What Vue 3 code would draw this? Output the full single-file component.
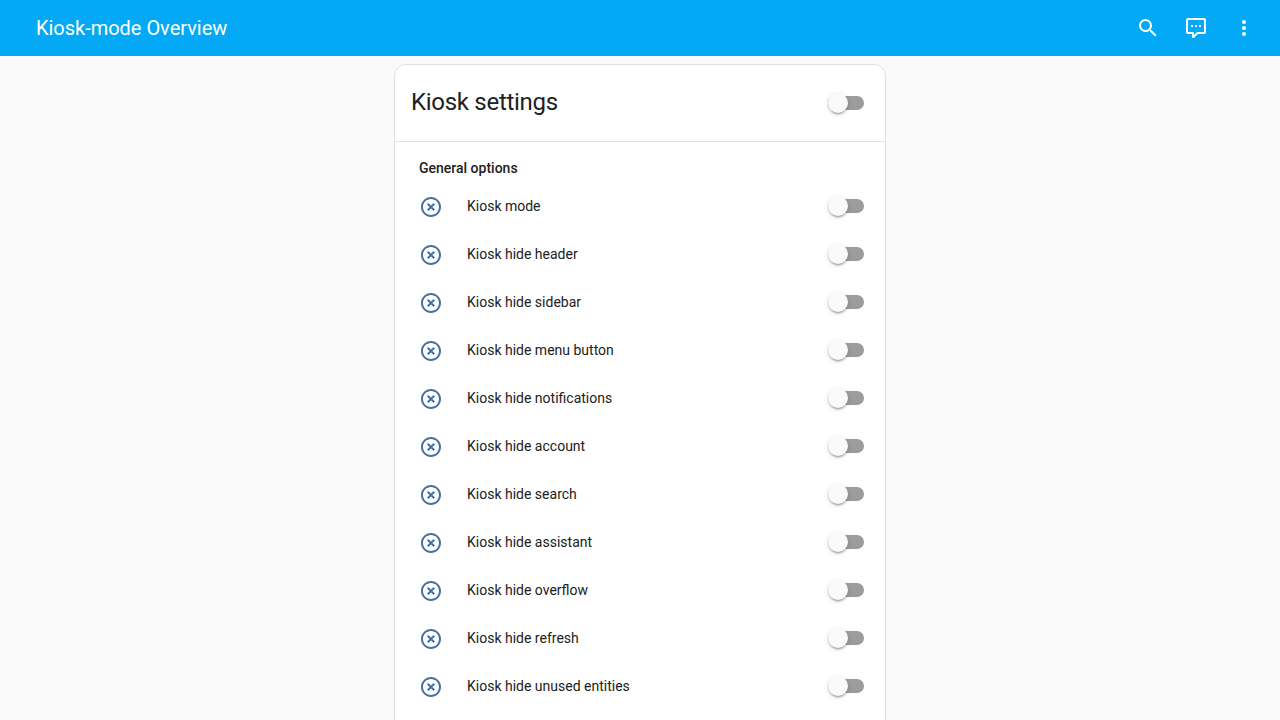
<script setup>
const options = [
  'Kiosk mode',
  'Kiosk hide header',
  'Kiosk hide sidebar',
  'Kiosk hide menu button',
  'Kiosk hide notifications',
  'Kiosk hide account',
  'Kiosk hide search',
  'Kiosk hide assistant',
  'Kiosk hide overflow',
  'Kiosk hide refresh',
  'Kiosk hide unused entities',
]
</script>

<template>
  <div class="page">
    <header class="toolbar">
      <div class="title">Kiosk-mode Overview</div>
      <nav class="actions">
        <button class="action" aria-label="Search">
          <svg viewBox="0 0 24 24"><path d="M9.5,3A6.5,6.5 0 0,1 16,9.5C16,11.11 15.41,12.59 14.44,13.73L14.71,14H15.5L20.5,19L19,20.5L14,15.5V14.71L13.73,14.44C12.59,15.41 11.11,16 9.5,16A6.5,6.5 0 0,1 3,9.5A6.5,6.5 0 0,1 9.5,3M9.5,5C7,5 5,7 5,9.5C5,12 7,14 9.5,14C12,14 14,12 14,9.5C14,7 12,5 9.5,5Z" /></svg>
        </button>
        <button class="action" aria-label="Assistant">
          <svg viewBox="0 0 24 24"><path d="M9,22A1,1 0 0,1 8,21V18H4A2,2 0 0,1 2,16V4C2,2.89 2.9,2 4,2H20A2,2 0 0,1 22,4V16A2,2 0 0,1 20,18H13.9L10.2,21.71C10,21.9 9.75,22 9.5,22V22H9M10,16V19.08L13.08,16H20V4H4V16H10M17,11H15V9H17V11M13,11H11V9H13V11M9,11H7V9H9V11Z" /></svg>
        </button>
        <button class="action" aria-label="Menu">
          <svg viewBox="0 0 24 24"><path d="M12,16A2,2 0 0,1 14,18A2,2 0 0,1 12,20A2,2 0 0,1 10,18A2,2 0 0,1 12,16M12,10A2,2 0 0,1 14,12A2,2 0 0,1 12,14A2,2 0 0,1 10,12A2,2 0 0,1 12,10M12,4A2,2 0 0,1 14,6A2,2 0 0,1 12,8A2,2 0 0,1 10,6A2,2 0 0,1 12,4Z" /></svg>
        </button>
      </nav>
    </header>
    <main class="card">
      <div class="card-header">
        <h1>Kiosk settings</h1>
        <span class="switch"></span>
      </div>
      <section class="options">
        <h2>General options</h2>
        <div v-for="option in options" :key="option" class="row">
          <svg class="state" viewBox="0 0 24 24"><path d="M12,20C7.59,20 4,16.41 4,12C4,7.59 7.59,4 12,4C16.41,4 20,7.59 20,12C20,16.41 16.41,20 12,20M12,2C6.47,2 2,6.47 2,12C2,17.53 6.47,22 12,22C17.53,22 22,17.53 22,12C22,6.47 17.53,2 12,2M14.59,8L12,10.59L9.41,8L8,9.41L10.59,12L8,14.59L9.41,16L12,13.41L14.59,16L16,14.59L13.41,12L16,9.41L14.59,8Z" /></svg>
          <span class="label">{{ option }}</span>
          <span class="switch"></span>
        </div>
      </section>
    </main>
  </div>
</template>

<style>
body {
  margin: 0;
  background: #fafafa;
}
</style>

<style scoped>
.page {
  height: 720px;
  overflow: hidden;
  background: #fafafa;
  color: #212121;
  font-family: Roboto, "Noto Sans", sans-serif;
}
.toolbar {
  height: 56px;
  display: flex;
  align-items: center;
  justify-content: space-between;
  box-sizing: border-box;
  padding: 0 12px 0 36px;
  background: #03a9f4;
  color: #fff;
}
.title {
  font-size: 20px;
  font-weight: 400;
  line-height: 56px;
  letter-spacing: -0.02px;
}
.actions {
  display: flex;
}
.action {
  width: 48px;
  height: 48px;
  padding: 12px;
  border: 0;
  background: none;
  color: inherit;
}
.action svg {
  display: block;
  width: 24px;
  height: 24px;
  fill: currentColor;
}
.card {
  width: 492px;
  height: 800px;
  box-sizing: border-box;
  margin: 8px auto 0;
  border: 1px solid #e0e0e0;
  border-radius: 12px;
  background: #fff;
}
.card-header {
  display: flex;
  align-items: center;
  justify-content: space-between;
  height: 76px;
  padding: 0 21px 0 16px;
  border-bottom: 1px solid #e0e0e0;
}
h1 {
  margin: 0 0 2px;
  font-size: 24px;
  font-weight: 400;
  line-height: 48px;
  letter-spacing: -0.288px;
}
.options {
  padding: 16px 21px 0 24px;
}
h2 {
  margin: 0 0 4px;
  font-size: 14px;
  font-weight: 500;
  line-height: 20px;
}
.row {
  display: flex;
  align-items: center;
  height: 48px;
}
.state {
  width: 24px;
  height: 24px;
  margin-top: 2px;
  fill: #44739e;
}
.label {
  flex: 1;
  margin-left: 24px;
  font-size: 14px;
  line-height: 20px;
}
.switch {
  position: relative;
  width: 36px;
  height: 14px;
  border-radius: 7px;
  background: #9c9c9c;
}
.switch::before {
  content: "";
  position: absolute;
  left: 0;
  top: -3px;
  width: 20px;
  height: 20px;
  border-radius: 50%;
  background: #fafafa;
  box-shadow: 0 3px 1px -2px rgba(0, 0, 0, 0.2), 0 2px 2px 0 rgba(0, 0, 0, 0.14), 0 1px 5px 0 rgba(0, 0, 0, 0.12);
}
</style>
